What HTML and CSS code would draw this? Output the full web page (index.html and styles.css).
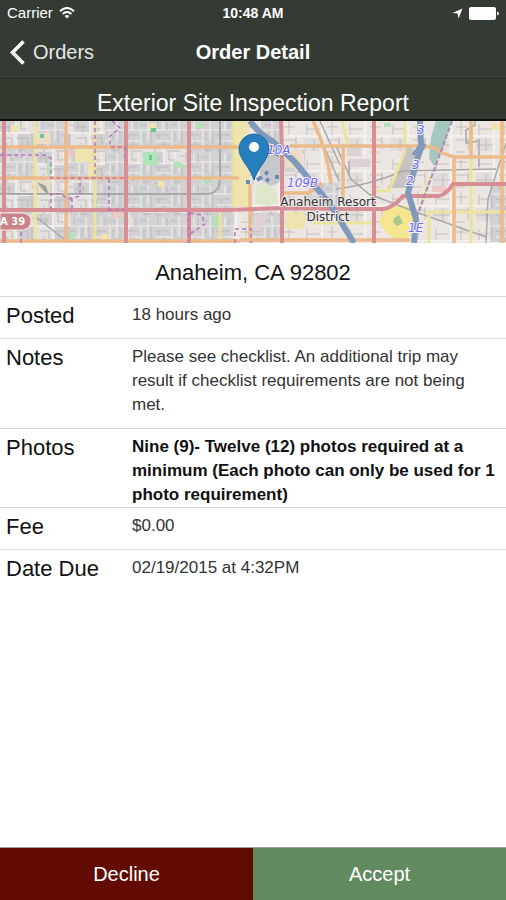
FILE: index.html
```html
<!DOCTYPE html>
<html lang="en">
<head>
<meta charset="utf-8">
<meta name="viewport" content="width=device-width, initial-scale=1">
<title>Order Detail</title>
<link rel="stylesheet" href="styles.css">
</head>
<body>
<div class="status">
  <span class="carrier">Carrier
    <svg width="16" height="12" viewBox="0 0 16 12" fill="none" stroke="#fff" stroke-width="2" aria-hidden="true"><path d="M1 4.2Q8-2.2 15 4.2M3.6 7Q8 3 12.4 7"/><path d="M5.6 9Q8 6.8 10.4 9L8 11.6Z" fill="#fff" stroke="none"/></svg>
  </span>
  <time class="clock">10:48 AM</time>
  <span class="power">
    <svg width="11" height="11" viewBox="0 0 11 11" fill="#fff" aria-hidden="true"><path d="M10.5.5L6.6 10.5 5.6 5.4.4 5Z"/></svg>
    <svg width="30" height="13" viewBox="0 0 30 13" fill="#fff" aria-hidden="true"><rect width="27" height="13" rx="2"/><path d="M28 4.5Q30 5 30 6.5T28 8.500Z"/></svg>
  </span>
</div>
<header class="nav">
  <a class="back" href="#orders"><svg width="15" height="25" viewBox="0 0 15 25" fill="none" stroke="#fff" stroke-width="3.6" aria-hidden="true"><path d="M13.500 1.500L2.500 12.500 13.500 23.500"/></svg>Orders</a>
  <h1>Order Detail</h1>
</header>
<h2 class="report">Exterior Site Inspection Report</h2>
<main>
  <svg class="map" viewBox="0 0 506 122" preserveAspectRatio="xMidYMid slice" role="img" aria-label="Map of Anaheim">
    <defs>
      <pattern id="dense" width="31" height="32" patternUnits="userSpaceOnUse">
        <path fill="#d2d1d3" d="M0 0h31v32H0z"/>
        <path fill="none" stroke="#e9e6e5" stroke-width="1.500" d="M0 9h31M8 0v9M17 9v23M0 20h17M24 0v20M17 26h14"/>
        <path fill="none" stroke="#b9b7bb" stroke-width=".8" d="M3 0v6M12 1v8M16 4h7M20 12v8M27 9v14M0 14h13M4 14v4M9 20v9M3 24h11M21 23v8M17 29h10M0 30h6"/>
      </pattern>
      <pattern id="mixed" width="37" height="31" patternUnits="userSpaceOnUse">
        <path fill="#e5e1df" d="M0 0h37v31H0z"/>
        <path fill="#d1d0d3" d="M0 0h15v11H0zM18 13h16v15H18z"/>
        <path fill="none" stroke="#f4f0ed" stroke-width="1.500" d="M0 12h37M16 0v31M27 0v12"/>
        <path fill="none" stroke="#b8b4b7" stroke-width=".8" d="M4 0v9M9 3v9M0 6h12M21 0v8h6M16 17h12v7M22 17v11M32 12v14M3 17h9v8M7 22v9M0 27h7M19 30h13M32 4h5"/>
      </pattern>
      <pattern id="sparse" width="43" height="35" patternUnits="userSpaceOnUse">
        <path fill="#ebe6e2" d="M0 0h43v35H0z"/>
        <path fill="#e0dddc" d="M3 17h15v13H3z"/>
        <path fill="none" stroke="#f4f0ed" stroke-width="2" d="M0 15h43M21 0v35"/>
        <path fill="none" stroke="#bdb8b8" stroke-width=".8" d="M6 3v11M6 8h13M13 18v12M3 24h17M26 19h12v10M31 0v14M26 6h11M38 16v6M26 31h9"/>
      </pattern>
    </defs>
    <path fill="url(#mixed)" d="M0 0h189v122H0z"/>
    <path fill="url(#dense)" d="M37 0h27v25H37zM68 27h27v30H68zM105 0h20v57h-20zM128 0h60v25h-60zM128 43h60v45h-60zM97 59h28v29H97zM70 91h55v30H70zM131 92h57v30h-57zM190 0h44v57h-44zM190 59h44v63h-44zM5 28h29v27H5z"/>
    <path fill="url(#sparse)" d="M234 0h272v122H234z"/>
    <path fill="url(#dense)" d="M261 0h20v25h-20zM308 62h31v24h-31zM285 29h20v23h-20zM490 65h16v56h-16zM251 92h29v29h-29z"/>
    <path fill="#f0e4ae" d="M75 28h18v13H75zM88 42h7v15h-7zM234 0h15v86h-15zM11 4h7v7h-7zM150 2h6v7h-6zM158 60h7v6h-7zM286 91h18q5 14-4 17h-14zM101 113h7v7h-7zM491 2h9v7h-9z"/>
    <path fill="#eddcc5" d="M37 12h14v11H37zM38 60h12v14H38zM285 29h17v18h-17z"/>
    <path fill="#b0e4b8" d="M143 31h14v13h-14zM47 42h4v12h-4zM69 112h6v6h-6zM203 57h8v5h-8zM213 92l7 8-4 8-5-8zM384 2h7v4h-7zM173 40l9 2 3 6-9-2zM196 2h7v5h-7z"/>
    <path fill="#69c88b" d="M40 13h4v4h-4zM151 7h5v4h-5zM149 34h3v5h-3z"/>
    <path fill="#eec8c6" d="M113 91h9v6h-9zM432 65h14v6h-14zM68 29h5v7h-5z"/>
    <path fill="#ddd1d7" d="M347 27h14v8h-14zM350 38h20v8h-20zM257 93h12l-9 17h-6z"/>
    <path fill="#c7c3c2" d="M405 25q16 3 13 17l-9 25h-22q16-18 18-42z"/>
    <ellipse fill="#c5c8ca" cx="272" cy="45" rx="13" ry="19"/>
    <path fill="#dce6c8" d="M256 65q9-5 17 2l5 12-9 6-13-3z"/>
    <path fill="none" stroke="#7288b5" stroke-width="4" d="M246 61h4M257 59l5-3M266 58l3 2M277 54v4M273 30l6 4M265 51l3 2"/>
    <path fill="#a6c8c1" d="M436 0h15l-8 25-9 20-5-8 2-21z"/>
    <path fill="#f5e58f" d="M384 90q20-9 28-3l4 22-9 9q-16 0-21-7l-7-10z"/>
    <path fill="#a8c98d" d="M394 97l5-3 4 8-6 3-4-4z"/>
    <path fill="#99a09e" d="M37 61l9 4 3 9-6-5z"/>

    <g fill="none" stroke="#aaa9aa" stroke-width="1.500">
      <path d="M0 73h204q16 1 16-16V0" stroke-width="2"/>
      <path d="M336 25l15 33 18 15 44 17 73 26M336 68q34-4 67-18l93-2M506 22l-18 56-2 44M349 40v15M313 0l26 60M320 0l20 44M475 0v4l-9 5v13l12-2M479 18v28M36 96l29 23"/>
    </g>
    <g fill="none" stroke="#ece49b" stroke-width="3">
      <path d="M35 0v122M95 0v122M220 91v31M234 0v86M405 0v30l-16 40h-15M471 0v122M430 55l-8 28M428 91h78M342 0l6 25M376 102h-62M429 91v31"/>
    </g>
    <g fill="none" stroke="#ecba8b" stroke-width="3.500">
      <path d="M0 26h240M0 57h239M66 0v122M0 120h240M250 63v59M270 25h154q13 1 18 7l12 4h52M313 0q14 28 18 62M343 25v52M454 35v87M471 0v37M502 0v122M240 119h170M281 72h28l13-10"/>
    </g>
    <g fill="none" stroke="#d78e95" stroke-width="4">
      <path d="M4 0v122M126 0v122M189 0v122M281 0q1 26 1 40v82M0 89h230l50-2 56 1h47q10-1 20-13h36q8-2 14-12h53M374 0v122"/>
    </g>
    <g fill="none" stroke="#b875bd" stroke-width="1.500" stroke-dasharray="4 3">
      <path d="M0 34h44l7 3v20h75M95 0v57M112 0l8 7-10 8v11h15v14M51 89V73h10l7 5 12-3V58M72 88V76M109 58v31M21 122v-17M189 91v31M190 92l12 2 3 9-15 10M235 122v-14h16v14M108 89h17"/>
    </g>
    <path fill="none" stroke="#a98bb7" stroke-width="2" stroke-dasharray="5 2" d="M452 0l-36 98"/>
    <g fill="none" stroke="#809abd" stroke-linejoin="round" stroke-width="6">
      <path d="M250 0q10 14 22 20l22 20 36 43 24 39"/>
      <path d="M420 0l1 25-13 47 8 26-2 24"/>
      <path d="M413 33l8-11 4 2-5 10z" stroke-width="2" fill="#809abd"/>
    </g>
    <g class="route">
      <text x="267" y="33">10A</text><text x="287" y="66">109B</text>
      <text x="417" y="13">3</text><text x="412" y="48">3</text><text x="406" y="64">2</text><text x="408" y="111">1E</text>
    </g>
    <path fill="#c98389" stroke="#f7e7e5" stroke-width="1" d="M0 92h23q8 1 8 8t-8 9H0z"/>
    <text class="shield" x="0" y="104">A 39</text>
    <g class="place"><text x="328" y="85">Anaheim Resort</text><text x="328" y="100">District</text></g>
    <path fill="#277ebd" stroke="#226ba3" d="M254 59q-2-7-10-18c-3-5-5-8-5-13a15 15 0 0 1 30 0c0 5-2 8-5 13q-8 11-10 18z"/>
    <circle cx="254" cy="26" r="5" fill="#fff"/>
  </svg>
  <p class="city">Anaheim, CA 92802</p>
  <dl class="details">
    <div class="row"><dt>Posted</dt><dd>18 hours ago</dd></div>
    <div class="row notes"><dt>Notes</dt><dd>Please see checklist. An additional trip may result if checklist requirements are not being met.</dd></div>
    <div class="row photos"><dt>Photos</dt><dd>Nine (9)- Twelve (12) photos required at a minimum (Each photo can only be used for 1 photo requirement)</dd></div>
    <div class="row"><dt>Fee</dt><dd>$0.00</dd></div>
    <div class="row"><dt>Date Due</dt><dd>02/19/2015 at 4:32PM</dd></div>
  </dl>
</main>
<footer class="actions">
  <button class="decline" type="button">Decline</button>
  <button class="accept" type="button">Accept</button>
</footer>
</body>
</html>
```
FILE: styles.css
```css
* {
  box-sizing: border-box;
}

body {
  display: flex;
  flex-direction: column;
  min-height: 100vh;
  margin: 0;
  background: #fff;
  color: #111;
  font-family: "Liberation Sans", Arial, sans-serif;
}

h1, h2, p, dl, dd {
  margin: 0;
}

svg {
  flex: none;
}

.status {
  display: grid;
  grid-template-columns: 1fr auto 1fr;
  align-items: center;
  padding: 4px 7px;
  background: #343b34;
  color: #fff;
  font-size: 14px;
  line-height: 18px;
}

.carrier, .power {
  display: flex;
  align-items: center;
  gap: 6px;
}

.carrier {
  font-size: 15px;
}

.power {
  justify-content: flex-end;
}

.clock {
  font-weight: bold;
}

.nav {
  display: grid;
  grid-template-columns: 1fr auto 1fr;
  align-items: center;
  height: 53px;
  padding: 0 10px;
  border-bottom: 1px solid #252b25;
  background: #343b34;
  color: #fff;
}

.back {
  display: flex;
  align-items: center;
  gap: 8px;
  color: #e6e8e6;
  font-size: 20px;
  text-decoration: none;
}

.nav h1 {
  font-size: 20px;
  line-height: 24px;
}

.report {
  padding: 11px 0 3px;
  border-bottom: 2px solid #0c110b;
  background: #323a30;
  color: #fff;
  font-size: 23px;
  font-weight: normal;
  line-height: 26px;
  text-align: center;
}

main {
  flex: 1;
}

.map {
  display: block;
  width: 100%;
  height: 122px;
}

.route {
  fill: #6f6bf0;
  stroke: #f5f1fb;
  stroke-width: 2px;
  paint-order: stroke;
  font: italic 12px "DejaVu Sans", sans-serif;
}

.place {
  fill: #343436;
  stroke: #eeeae8;
  stroke-width: 2px;
  paint-order: stroke;
  font: 12px "DejaVu Sans", sans-serif;
  text-anchor: middle;
}

.shield {
  fill: #fff;
  font: bold 10px "DejaVu Sans", sans-serif;
}

.city {
  padding: 17px 0 10px;
  font-size: 22px;
  line-height: 26px;
  text-align: center;
}

.row {
  display: grid;
  grid-template-columns: 126px 1fr;
  align-items: start;
  padding: 6px 6px 9px;
  border-top: 1px solid #dcdcdc;
}

.row dt {
  font-size: 22px;
  line-height: 26px;
}

.row dd {
  color: #333;
  font-size: 17px;
  line-height: 24px;
}

.notes {
  padding-bottom: 11px;
}

.photos {
  padding-bottom: 0;
}

.photos dd {
  color: #111;
  font-weight: bold;
}

.actions {
  display: grid;
  grid-template-columns: 1fr 1fr;
  border-top: 1px solid #9aa596;
}

.actions button {
  height: 52px;
  border: 0;
  color: #fff;
  font-family: inherit;
  font-size: 20px;
}

.decline {
  background: #620b02;
}

.accept {
  background: #618b5f;
}
```
